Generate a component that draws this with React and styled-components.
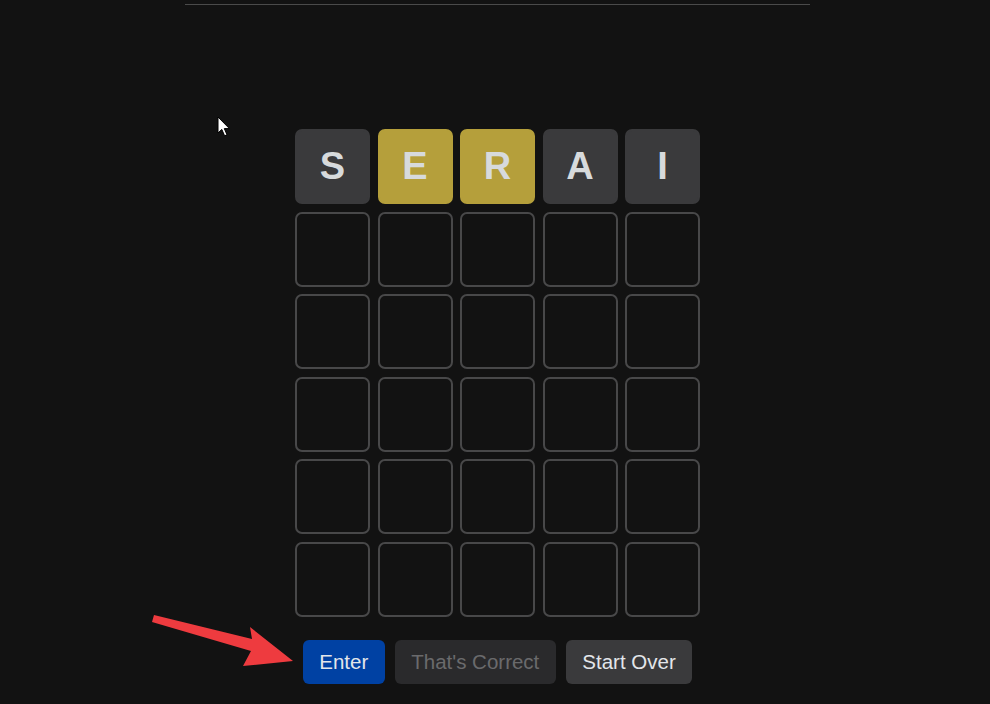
import React from 'react'
import styled, { createGlobalStyle } from 'styled-components';

const GlobalStyle = createGlobalStyle`
    html, body {
        margin: 0;
        padding: 0;
        background-color: #121212;
    }
    body {
        font-family: "Liberation Sans", Arial, sans-serif;
        color: #d7dadc;
        min-height: 704px;
    }
`

const guess = [
    { letter: 'S', state: 'absent' },
    { letter: 'E', state: 'present' },
    { letter: 'R', state: 'present' },
    { letter: 'A', state: 'absent' },
    { letter: 'I', state: 'absent' },
];

const tileColors = {
    absent: '#3a3a3c',
    present: '#b59f3b',
};

function App() {
    const rows = [guess, ...Array.from({ length: 5 }, () => Array(5).fill(null))];

    return (
        <Page>
            <GlobalStyle />
            <Rule />
            <Board>
                {rows.map((row, r) =>
                    row.map((cell, c) => (
                        <Tile key={`${r}-${c}`} $state={cell ? cell.state : 'empty'}>
                            {cell ? cell.letter : ''}
                        </Tile>
                    ))
                )}
            </Board>
            <Controls>
                <Button $variant="primary">Enter</Button>
                <Button $variant="disabled" disabled>That's Correct</Button>
                <Button $variant="secondary">Start Over</Button>
            </Controls>

            {/* screenshot annotations */}
            <Cursor width="14" height="22" viewBox="0 0 14 22">
                <path d="M1 1 L1 17 L4.8 13.4 L7.6 19.8 L10 18.8 L7.3 12.6 L12.4 12.6 Z" fill="#fff" stroke="#000" strokeWidth="1" strokeLinejoin="round" />
            </Cursor>
            <Arrow width="160" height="60" viewBox="0 0 160 60">
                <polygon points="2,17 4,10 102,34 100,22 143,56 93,61 101,46" fill="#ee3b3f" />
            </Arrow>
        </Page>
    )
}

export default App


const Page = styled.div`
    position: relative;
    min-height: 704px;
    padding: 4px 0 0 5px;
    box-sizing: border-box;
    display: flex;
    flex-direction: column;
    align-items: center;
`

const Rule = styled.div`
    width: 625px;
    height: 1px;
    background-color: #4a4a4a;
`

const Board = styled.div`
    margin-top: 124px;
    display: grid;
    grid-template-columns: repeat(5, 75px);
    grid-auto-rows: 75px;
    gap: 7.6px 7.5px;
`

const Tile = styled.div`
    box-sizing: border-box;
    display: flex;
    align-items: center;
    justify-content: center;
    border-radius: 7px;
    border: 2px solid ${p => p.$state === 'empty' ? '#484849' : tileColors[p.$state]};
    background-color: ${p => p.$state === 'empty' ? 'transparent' : tileColors[p.$state]};
    font-size: 38px;
    font-weight: 700;
    color: #d7dadc;
    text-transform: uppercase;
`

const Controls = styled.div`
    margin-top: 23px;
    display: flex;
    gap: 10px;
`

const buttonColors = {
    primary: { bg: '#0041a3', fg: '#e3e6ea' },
    disabled: { bg: '#2a2a2c', fg: '#6a6a6c' },
    secondary: { bg: '#3a3a3c', fg: '#e3e6ea' },
};

const Button = styled.button`
    height: 44px;
    padding: 0 16.5px;
    border: none;
    border-radius: 6px;
    font-family: "Liberation Sans", Arial, sans-serif;
    font-size: 20.5px;
    background-color: ${p => buttonColors[p.$variant].bg};
    color: ${p => buttonColors[p.$variant].fg};
    cursor: ${p => p.$variant === 'disabled' ? 'default' : 'pointer'};
`

const Cursor = styled.svg`
    position: absolute;
    left: 217px;
    top: 116px;
`

const Arrow = styled.svg`
    position: absolute;
    left: 150px;
    top: 605px;
    overflow: visible;
`
